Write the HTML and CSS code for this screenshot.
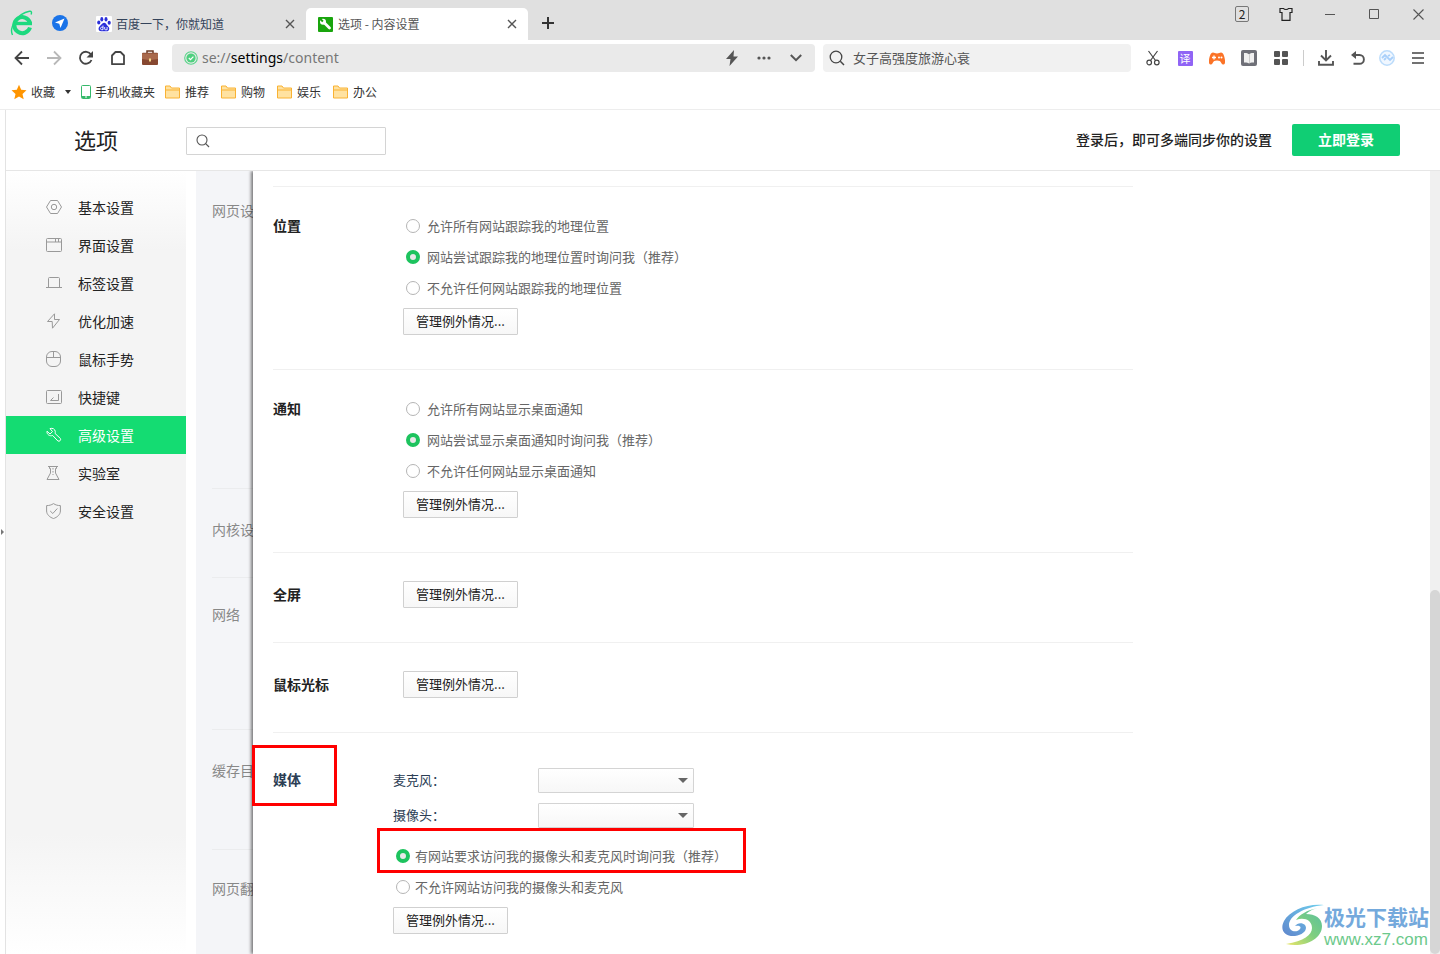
FILE: index.html
```html
<!DOCTYPE html>
<html lang="zh-CN">
<head>
<meta charset="utf-8">
<title>选项 - 内容设置</title>
<link rel="stylesheet" href="styles.css">
</head>
<body>
<div class="tabbar">
  <div class="brand">
    <svg width="24" height="26" viewBox="0 0 24 26"><g fill="none" stroke="#1dd97f"><path d="M20 17.500A8 8 0 1 1 20 12.800" stroke-width="4"/><path d="M5 13.500h17" stroke-width="3.400"/><path d="M2.500 25C-1 18 7 3.500 19.500 1.300c2-.3 2.500 1 1.500 3.200" stroke-width="1.400"/></g></svg>
    <svg width="16" height="16" viewBox="0 0 16 16"><circle cx="8" cy="8" r="8" fill="#1a73e8"/><path d="M12.500 3.500L3 7.500l4.300 1.200L8.500 13z" fill="#fff"/></svg>
  </div>
  <div class="tab">
    <svg width="16" height="16" viewBox="0 0 16 16"><rect width="16" height="16" rx="1" fill="#fff"/><g fill="#2b2fd9"><ellipse cx="2.800" cy="6.500" rx="1.600" ry="2.100"/><ellipse cx="5.800" cy="3.200" rx="1.500" ry="2.200"/><ellipse cx="10" cy="3.200" rx="1.500" ry="2.200"/><ellipse cx="13.200" cy="6.800" rx="1.600" ry="2"/><path d="M8 6.800c2 0 2.500 2.200 4.200 3.600 2 1.700 1 5-1.500 4.900-1.900-.1-3.700-.1-5.600 0-2.500.1-3.400-3-1.600-4.700C5.200 9.200 6 6.800 8 6.800z"/></g><path d="M7 9.500v4.200H5.600c-1.500 0-1.500-2.500 0-2.500H7M8.700 11v2c0 .6.300.8.900.8h1.500V11" fill="none" stroke="#fff" stroke-width=".9"/></svg>
    <span class="tab__title">百度一下，你就知道</span>
    <button class="tab__close" aria-label="关闭标签"><svg width="10" height="10" viewBox="0 0 10 10"><path d="M1 1l8 8M9 1L1 9" stroke="#555" stroke-width="1.400"/></svg></button>
  </div>
  <div class="tab tab--active">
    <svg width="15" height="15" viewBox="0 0 15 15"><rect width="15" height="15" rx="1" fill="#19a50d"/><path d="M5 4.500l6.500 6.500" stroke="#fff" stroke-width="2.800" stroke-linecap="round"/><circle cx="5" cy="4.700" r="3" fill="#fff"/><path d="M1.800 1.600L4.900 4.500" stroke="#19a50d" stroke-width="2"/></svg>
    <span class="tab__title">选项 - 内容设置</span>
    <button class="tab__close" aria-label="关闭标签"><svg width="10" height="10" viewBox="0 0 10 10"><path d="M1 1l8 8M9 1L1 9" stroke="#555" stroke-width="1.400"/></svg></button>
  </div>
  <button class="newtab" aria-label="新标签页"><svg width="12" height="12" viewBox="0 0 12 12"><path d="M6 0v12M0 6h12" stroke="#333" stroke-width="2"/></svg></button>
  <div class="window">
    <button class="window__btn"><span class="count">2</span></button>
    <button class="window__btn" aria-label="皮肤"><svg width="14" height="14" viewBox="0 0 14 14"><path d="M1 1.500h3.500c.8 1.300 4.200 1.300 5 0H13v4h-2v7.800H3V5.500H1z" fill="none" stroke="#222" stroke-width="1.200"/></svg></button>
    <button class="window__btn" aria-label="最小化"><svg width="10" height="10" viewBox="0 0 10 10"><path d="M0 5.500h10" stroke="#555"/></svg></button>
    <button class="window__btn" aria-label="最大化"><svg width="10" height="10" viewBox="0 0 10 10"><path d="M.5.500h9v9h-9z" fill="none" stroke="#555"/></svg></button>
    <button class="window__btn" aria-label="关闭"><svg width="11" height="11" viewBox="0 0 11 11"><path d="M.5.500l10 10M10.500.500l-10 10" stroke="#555" stroke-width="1.100"/></svg></button>
  </div>
</div>

<div class="toolbar">
  <div class="nav">
    <button class="icon-btn" aria-label="后退"><svg width="16" height="16" viewBox="0 0 16 16"><path d="M15 8H2M8 1.500L1.500 8 8 14.500" fill="none" stroke="#444" stroke-width="1.800"/></svg></button>
    <button class="icon-btn" aria-label="前进"><svg width="16" height="16" viewBox="0 0 16 16"><path d="M1 8h13M8 1.500L14.500 8 8 14.500" fill="none" stroke="#b8b8b8" stroke-width="1.800"/></svg></button>
    <button class="icon-btn" aria-label="刷新"><svg width="16" height="16" viewBox="0 0 16 16"><path d="M13.500 10A6 6 0 1 1 13 4.500" fill="none" stroke="#444" stroke-width="1.800"/><path d="M15 1v6.500H8.500z" fill="#444"/></svg></button>
    <button class="icon-btn" aria-label="主页"><svg width="16" height="16" viewBox="0 0 16 16"><path d="M2 14.200V5.500L5.500 2h5L14 5.500v8.700z" fill="none" stroke="#444" stroke-width="1.800" stroke-linejoin="round"/></svg></button>
    <button class="icon-btn" aria-label="工具箱"><svg width="16" height="16" viewBox="0 0 16 16"><path d="M5 3V1h6v2" fill="none" stroke="#6b3a25" stroke-width="1.500"/><rect y="2.800" width="16" height="12.200" rx="1" fill="#874830"/><path d="M0 3.500h16V9L9 10H7L0 9z" fill="#a9694c"/><rect x="7" y="8.500" width="2" height="3" fill="#f6d98b"/></svg></button>
  </div>
  <div class="address">
    <svg width="14" height="14" viewBox="0 0 14 14"><circle cx="7" cy="7" r="6.300" fill="none" stroke="#5ad48a" stroke-width="1.100"/><circle cx="7" cy="7" r="4.600" fill="#4fd07f"/><path d="M4.800 7l1.700 1.700L9.400 5.600" fill="none" stroke="#fff" stroke-width="1.200"/></svg>
    <span class="address__url">se://<b>settings</b>/content</span>
    <button class="icon-btn" aria-label="极速模式"><svg width="14" height="16" viewBox="0 0 14 16"><path d="M9 0L1 9h4.500L4.500 16 13 6.500H8.500z" fill="#555"/></svg></button>
    <button class="icon-btn" aria-label="更多"><svg width="14" height="4" viewBox="0 0 14 4"><g fill="#555"><circle cx="2" cy="2" r="1.600"/><circle cx="7" cy="2" r="1.600"/><circle cx="12" cy="2" r="1.600"/></g></svg></button>
    <button class="icon-btn" aria-label="展开"><svg width="12" height="8" viewBox="0 0 12 8"><path d="M.8 1L6 6.200 11.200 1" fill="none" stroke="#555" stroke-width="2"/></svg></button>
  </div>
  <label class="search">
    <svg width="16" height="16" viewBox="0 0 16 16"><circle cx="7" cy="7" r="5.800" fill="none" stroke="#444" stroke-width="1.300"/><path d="M11.300 11.300L15 15" stroke="#444" stroke-width="1.500"/></svg>
    <input type="text" aria-label="搜索" placeholder="女子高强度旅游心衰">
  </label>
  <div class="tools">
    <button class="icon-btn" aria-label="截图"><svg width="14" height="16" viewBox="0 0 14 16"><g fill="none" stroke="#444" stroke-width="1.200"><path d="M2.500 1l7 9.500M11.500 1l-7 9.500"/><circle cx="3.200" cy="12.500" r="2.300"/><circle cx="10.800" cy="12.500" r="2.300"/></g></svg></button>
    <button class="icon-btn"><span class="translate">译</span></button>
    <button class="icon-btn" aria-label="游戏"><svg width="16" height="13" viewBox="0 0 16 13"><path d="M4 .5c1.500 0 2 1 4 1s2.500-1 4-1c3.500 0 4.600 9 3.800 11-.6 1.600-2.500 1.300-3.500-.5C11.300 9.200 10.500 8.500 8 8.500S4.700 9.200 3.700 11c-1 1.800-2.900 2.100-3.500.5C-.6 9.500.5.500 4 .5z" fill="#fb7327"/><path d="M5 3.500v4M3 5.500h4" stroke="#fff" stroke-width="1.300"/><circle cx="10" cy="5.500" r="1" fill="#fff"/><circle cx="12.500" cy="5.500" r="1" fill="#fff"/></svg></button>
    <button class="icon-btn" aria-label="阅读"><svg width="16" height="16" viewBox="0 0 16 16"><rect width="16" height="16" rx="2" fill="#6f7078"/><path d="M8 4.200C6.500 3 5 2.800 3 3v9.500C5 12.300 6.500 12.500 8 13.600c1.500-1.100 3-1.300 5-1.100V3C11 2.800 9.500 3 8 4.200z" fill="#f0f0f0"/><path d="M8.500 4.200v9" stroke="#ccc"/></svg></button>
    <button class="icon-btn" aria-label="扩展"><svg width="14" height="14" viewBox="0 0 14 14"><g fill="#555"><rect width="6" height="6" rx="1"/><rect x="8" width="6" height="6" rx="1"/><rect y="8" width="6" height="6" rx="1"/><rect x="8" y="8" width="6" height="6" rx="1"/></g></svg></button>
    <span class="tools__sep"></span>
    <button class="icon-btn" aria-label="下载"><svg width="16" height="16" viewBox="0 0 16 16"><path d="M8 0v10M3 5.500l5 5 5-5M1 11v3.800h14V11" fill="none" stroke="#555" stroke-width="1.900"/></svg></button>
    <button class="icon-btn" aria-label="恢复"><svg width="16" height="16" viewBox="0 0 16 16"><path d="M2.500 5H9.500a4.300 4.300 0 0 1 0 8.800H3.500" fill="none" stroke="#555" stroke-width="1.900"/><path d="M6 1v8L1 5z" fill="#555"/></svg></button>
    <button class="icon-btn icon-btn--snug" aria-label="助手"><svg width="16" height="16" viewBox="0 0 16 16"><circle cx="8" cy="8" r="7.200" fill="#f0f7ff" stroke="#bcdcfb" stroke-width="1.500"/><path d="M3 8l3-3 5 5 3-3M5 10l2-2M9 6l2-1" fill="none" stroke="#a8cffa" stroke-width="1.800"/></svg></button>
    <button class="icon-btn" aria-label="菜单"><svg width="12" height="12" viewBox="0 0 12 12"><path d="M0 1h12M0 6h12M0 11h12" stroke="#444" stroke-width="1.700"/></svg></button>
  </div>
</div>

<nav class="bookmarks">
  <a class="bookmark bookmark--star" href="#"><svg width="16" height="16" viewBox="0 0 16 16"><path d="M8 .8l2.200 4.900 5.300.6-4 3.600 1.200 5.300L8 12.500l-4.700 2.700 1.200-5.300-4-3.600 5.300-.6z" fill="#ff9500"/></svg>收藏</a>
  <button class="bookmarks__more" aria-label="更多收藏"><svg width="6" height="4" viewBox="0 0 6 4"><path d="M0 0h6L3 4z" fill="#333"/></svg></button>
  <a class="bookmark" href="#"><svg width="10" height="14" viewBox="0 0 10 14"><rect x=".5" y=".5" width="9" height="13" rx="1" fill="#fff" stroke="#36b96b"/><path d="M1 11h8v2H1z" fill="#36b96b"/><path d="M4 12h2" stroke="#fff"/></svg>手机收藏夹</a>
  <a class="bookmark" href="#"><svg width="15" height="14" viewBox="0 0 15 14"><path d="M.5 13V1h4.500l1.500 2h8v10z" fill="#ffe2a1" stroke="#f9b233"/><path d="M1 5h13" stroke="#f9b233"/></svg>推荐</a>
  <a class="bookmark" href="#"><svg width="15" height="14" viewBox="0 0 15 14"><path d="M.5 13V1h4.500l1.500 2h8v10z" fill="#ffe2a1" stroke="#f9b233"/><path d="M1 5h13" stroke="#f9b233"/></svg>购物</a>
  <a class="bookmark" href="#"><svg width="15" height="14" viewBox="0 0 15 14"><path d="M.5 13V1h4.500l1.500 2h8v10z" fill="#ffe2a1" stroke="#f9b233"/><path d="M1 5h13" stroke="#f9b233"/></svg>娱乐</a>
  <a class="bookmark" href="#"><svg width="15" height="14" viewBox="0 0 15 14"><path d="M.5 13V1h4.500l1.500 2h8v10z" fill="#ffe2a1" stroke="#f9b233"/><path d="M1 5h13" stroke="#f9b233"/></svg>办公</a>
</nav>

<div class="viewport">
  <div class="gutter"><svg width="4" height="6" viewBox="0 0 4 6"><path d="M1 0l3 3-3 3z" fill="#777"/></svg></div>
  <div class="page">
    <header class="header">
      <h1 class="header__title">选项</h1>
      <label class="header__search">
        <svg width="14" height="14" viewBox="0 0 14 14"><circle cx="6" cy="6" r="5" fill="none" stroke="#555" stroke-width="1.100"/><path d="M9.700 9.700L13 13" stroke="#555" stroke-width="1.200"/></svg>
        <input type="text" aria-label="搜索设置">
      </label>
      <p class="header__tip">登录后，即可多端同步你的设置</p>
      <button class="header__login">立即登录</button>
    </header>
    <div class="body">
      <nav class="sidebar">
        <a class="side" href="#"><svg width="16" height="16" viewBox="0 0 16 16"><path d="M4.500 1.500h7L15.500 8l-4 6.500h-7L.5 8z"/><circle cx="8" cy="8" r="2.700"/></svg>基本设置</a>
        <a class="side" href="#"><svg width="16" height="16" viewBox="0 0 16 16"><rect x=".5" y="1.500" width="15" height="13" rx="1"/><path d="M1 5h14M9.500 2v3M12.500 2v3"/></svg>界面设置</a>
        <a class="side" href="#"><svg width="16" height="16" viewBox="0 0 16 16"><path d="M2.500 12V3.500q0-1 1-1h9q1 0 1 1V12M0 12.500h16"/></svg>标签设置</a>
        <a class="side" href="#"><svg width="16" height="16" viewBox="0 0 16 16"><path d="M8.500.800L1.500 8.500h4.700L6.500 15.200 13.500 6.500H8.500z"/></svg>优化加速</a>
        <a class="side" href="#"><svg width="16" height="16" viewBox="0 0 16 16"><rect x=".5" y=".5" width="14" height="15" rx="5.500"/><path d="M.5 6.500h14M7.500 1v5.500"/></svg>鼠标手势</a>
        <a class="side" href="#"><svg width="16" height="16" viewBox="0 0 16 16"><rect x=".5" y="1.500" width="15" height="13" rx="1"/><path d="M12.500 5v6.500H4.500l3-3"/></svg>快捷键</a>
        <a class="side side--active" href="#"><svg width="16" height="16" viewBox="0 0 16 16"><path d="M4 1.600C6.500.700 9 2 9.300 4.500c0 .8-.1 1.300-.3 1.900l5.500 5.200c.7 1.600-1 3.200-2.600 2.400L6.700 8.500C3.800 9.500.500 7.500 1 4.200L4 7l2.500-2.400z"/></svg>高级设置</a>
        <a class="side" href="#"><svg width="16" height="16" viewBox="0 0 16 16"><path d="M2 1.500h10M3.500 1.500v2h1V8L1 14.500h12L9.500 8V3.500h1v-2"/><path d="M7 3v7" stroke-dasharray="1.500 1.500"/></svg>实验室</a>
        <a class="side" href="#"><svg width="16" height="16" viewBox="0 0 16 16"><path d="M7.500.600C5.500 2 3 2.600.600 2.600V8c0 3.500 3.400 6.500 6.900 7.500 3.500-1 6.900-4 6.900-7.500V2.600C12 2.600 9.500 2 7.500.600z"/><path d="M4.200 8l2.600 2.500 4.500-5"/></svg>安全设置</a>
      </nav>
      <div class="under" aria-hidden="true">
        <div class="under__item under__item--first">网页设置</div>
        <div class="under__item under__item--short">内核设置</div>
        <div class="under__item under__item--net">网络</div>
        <div class="under__item">缓存目录</div>
        <div class="under__item under__item--last">网页翻译</div>
      </div>
      <main class="panel">
        <section class="section">
          <h2 class="section__title">位置</h2>
          <div class="section__body">
            <label class="radio"><input type="radio" name="geo">允许所有网站跟踪我的地理位置</label>
            <label class="radio"><input type="radio" name="geo" checked>网站尝试跟踪我的地理位置时询问我（推荐）</label>
            <label class="radio"><input type="radio" name="geo">不允许任何网站跟踪我的地理位置</label>
            <button class="manage">管理例外情况...</button>
          </div>
        </section>
        <section class="section">
          <h2 class="section__title">通知</h2>
          <div class="section__body">
            <label class="radio"><input type="radio" name="notice">允许所有网站显示桌面通知</label>
            <label class="radio"><input type="radio" name="notice" checked>网站尝试显示桌面通知时询问我（推荐）</label>
            <label class="radio"><input type="radio" name="notice">不允许任何网站显示桌面通知</label>
            <button class="manage">管理例外情况...</button>
          </div>
        </section>
        <section class="section section--single">
          <h2 class="section__title">全屏</h2>
          <button class="manage">管理例外情况...</button>
        </section>
        <section class="section section--single">
          <h2 class="section__title">鼠标光标</h2>
          <button class="manage">管理例外情况...</button>
        </section>
        <section class="section section--media">
          <h2 class="section__title">媒体</h2>
          <div class="section__body">
            <div class="devices">
              <label for="mic">麦克风：</label>
              <span class="select"><select id="mic"></select></span>
              <label for="cam">摄像头：</label>
              <span class="select"><select id="cam"></select></span>
            </div>
            <label class="radio"><input type="radio" name="media" checked>有网站要求访问我的摄像头和麦克风时询问我（推荐）</label>
            <label class="radio"><input type="radio" name="media">不允许网站访问我的摄像头和麦克风</label>
            <button class="manage">管理例外情况...</button>
          </div>
          <span class="mark mark--title"></span>
          <span class="mark mark--option"></span>
        </section>
      </main>
      <div class="scroll"><div class="scroll__thumb"></div></div>
    </div>
  </div>
</div>

<div class="watermark">
  <svg width="42" height="42" viewBox="0 0 42 42">
    <defs>
      <linearGradient id="wa" x1="1" y1="0" x2="0" y2="1"><stop offset="0" stop-color="#6fd0ee"/><stop offset="1" stop-color="#5f86cc"/></linearGradient>
      <linearGradient id="wb" x1="1" y1="0" x2="0" y2="1"><stop offset="0" stop-color="#58bfa0"/><stop offset=".5" stop-color="#7fcf7f"/><stop offset="1" stop-color="#ebe568"/></linearGradient>
    </defs>
    <path d="M42 1C26-1 8 6 2 17c-5 10 2 16 11 15 9-1 13-7 10-11-3-3-8-2-10 1 3-1 7 0 5 3-3 4-11 3-11-4C7 12 22 3 42 1z" fill="url(#wa)"/>
    <path d="M36 4C25 6 17 11 14 16c8-3 16 0 16 8 0 7-8 13-26 16 17 4 36-4 36-18 0-8-7-12-16-12 3-3 7-5 12-6z" fill="url(#wb)"/>
  </svg>
  <div class="watermark__text"><span class="watermark__name">极光下载站</span><span class="watermark__url">www.xz7.com</span></div>
</div>
</body>
</html>
```
FILE: styles.css
```css
* { box-sizing: border-box; }
body {
  margin: 0;
  height: 100vh;
  display: flex;
  flex-direction: column;
  overflow: hidden;
  background: #fff;
  color: #222;
  font: 12px/20px "Noto Sans CJK SC", sans-serif;
}
button, input, select { font: inherit; color: inherit; }
button { border: 0; padding: 0; background: none; }
a { color: inherit; text-decoration: none; }
svg { display: block; flex: none; }
h1, h2, p { margin: 0; }

/* tab strip */
.tabbar { display: flex; flex: none; height: 40px; background: #e0e0e0; }
.brand { display: flex; align-items: center; gap: 18px; width: 84px; padding: 5px 0 0 10px; }
.tab {
  display: flex; align-items: center; gap: 4px;
  width: 222px; height: 32px; margin-top: 8px; padding: 0 11px 0 12px;
  border-radius: 5px 5px 0 0; color: #34435a;
}
.tab--active { gap: 5px; background: #fff; color: #555; }
.tab__title { flex: 1; }
.tab__close { display: grid; place-items: center; width: 10px; height: 20px; }
.newtab { display: grid; place-items: center; width: 40px; padding-top: 6px; }
.window { display: flex; height: 28px; margin-left: auto; }
.window__btn { display: grid; place-items: center; width: 44px; }
.count { width: 14px; border: 1px solid #777; border-radius: 2px; font-size: 12px; line-height: 14px; }

/* toolbar */
.toolbar { display: flex; flex: none; align-items: center; height: 36px; padding-right: 6px; }
.icon-btn { display: grid; place-items: center; width: 32px; height: 28px; flex: none; }
.icon-btn--snug { margin: 0 -1px 0 -3px; }
.nav { display: flex; width: 172px; padding-left: 6px; }
.address {
  display: flex; align-items: center; flex: 1; min-width: 0; height: 28px;
  margin-right: 8px; padding: 0 3px 0 12px; border-radius: 4px; background: #eaeaea;
}
.address__url { flex: 1; margin-left: 4px; color: #777; font: 14px/20px "Noto Sans", sans-serif; }
.address__url b { color: #000; font-weight: 400; }
.search {
  display: flex; align-items: center; gap: 8px; flex: none; width: 308px; height: 28px;
  margin-right: 6px; padding: 0 6px; border-radius: 4px; background: #f1f1f1;
}
.search input { flex: 1; min-width: 0; border: 0; padding: 0; background: none; outline: 0; font-size: 13px; }
.search input::placeholder { color: #555; opacity: 1; }
.tools { display: flex; align-items: center; }
.tools__sep { width: 1px; height: 16px; margin: 0 6px; background: #ccc; }
.translate { width: 15px; border-radius: 1px; background: #9064f5; color: #fff; font-size: 11px; line-height: 15px; }

/* bookmarks */
.bookmarks {
  display: flex; flex: none; align-items: center; height: 34px; padding: 0 0 1px 11px;
  border-bottom: 1px solid #ededed; color: #333;
}
.bookmark { display: flex; align-items: center; gap: 5px; margin-right: 12px; }
.bookmark:nth-of-type(2) { gap: 4px; margin-right: 10px; }
.bookmark--star { gap: 4px; margin-right: 0; }
.bookmarks__more { display: grid; place-items: center; width: 26px; height: 20px; }

/* settings page */
.viewport { display: flex; flex: 1; min-height: 0; }
.gutter { display: flex; align-items: center; width: 6px; border-right: 1px solid #e3e3e3; }
.page { display: flex; flex-direction: column; flex: 1; min-width: 0; }
.header {
  display: flex; flex: none; align-items: center; height: 61px; padding-right: 40px;
  border-bottom: 1px solid #e6e6e6; font-size: 14px;
}
.header__title { width: 180px; padding: 0 0 2px 68px; font-size: 22px; font-weight: 400; line-height: 32px; }
.header__search {
  display: flex; align-items: center; gap: 6px; width: 200px; height: 28px; margin-top: 2px;
  padding: 0 9px; border: 1px solid #d4d4d4; border-radius: 1px;
}
.header__search input { flex: 1; min-width: 0; border: 0; padding: 0; outline: 0; }
.header__tip { margin-left: auto; padding-bottom: 2px; font-weight: 500; }
.header__login {
  width: 108px; height: 32px; margin-left: 20px; padding-bottom: 2px; border-radius: 2px;
  background: #10ce74; color: #fff; font-weight: 700;
}
.body { display: flex; flex: 1; min-height: 0; }
.sidebar {
  flex: none; width: 180px; margin-right: 10px; padding-top: 17px; font-size: 14px;
  background: linear-gradient(#fff, #f4f4f4 80px, #f4f4f4 calc(100% - 120px), #fff);
}
.side { display: flex; align-items: center; gap: 16px; height: 38px; padding: 0 0 1px 40px; }
.side svg { fill: none; stroke: #999; }
.side--active { background: #14dc72; color: #fff; }
.side--active svg { stroke: #fff; }

.under {
  flex: none; width: 57px; padding-left: 16px; overflow: hidden;
  color: #888; font-size: 14px; line-height: 22px; white-space: nowrap; background: #f4f5f8;
}
.under__item { height: 120px; padding-top: 29px; border-top: 1px solid #ebecee; }
.under__item--first { height: 317px; padding-top: 28px; border-top: 0; }
.under__item--short { height: 89px; }
.under__item--net { height: 152px; padding-top: 25px; }
.under__item--last { padding-top: 27px; }

.panel {
  position: relative; flex: 1; min-width: 0; padding: 15px 20px 0;
  background: #fff; box-shadow: -2px 0 3px rgba(0, 0, 0, .5);
  clip-path: inset(0 0 0 -8px);
}
.section {
  display: flex; align-items: flex-start; max-width: 860px;
  padding: 28px 0 34px; border-top: 1px solid #f0f0f0;
}
.section__title { flex: none; width: 130px; padding-bottom: 2px; font-size: 14px; font-weight: 700; line-height: 20px; }
.section__body { display: flex; flex-direction: column; align-items: flex-start; gap: 9px; }
.section--single { align-items: center; }
.radio {
  display: flex; align-items: center; gap: 7px; padding-left: 3px;
  color: #666; font-size: 13px; line-height: 22px;
}
.radio input {
  appearance: none; flex: none; width: 14px; height: 14px; margin: 0;
  border: 1px solid #b5b5b5; border-radius: 50%; background: #fff;
}
.radio input:checked { border: 4px solid #1dc35e; background: #e8e8e8; }
.manage {
  height: 27px; width: 115px; padding-bottom: 1px; border: 1px solid #d0d0d0; border-radius: 1px;
  background: linear-gradient(#fff, #f7f7f7); font-size: 13px; line-height: 22px;
}
.section--media { position: relative; padding-top: 35px; color: #2c3e55; }
.section--media .section__title { width: 120px; line-height: 23px; }
.section--media .radio { gap: 5px; }
.section--media .manage { color: #222; }
.devices {
  display: grid; grid-template-columns: 145px 156px; gap: 10px 0;
  margin-bottom: 8px; font-size: 13px; line-height: 23px;
}
.select { position: relative; }
.select select {
  display: block; appearance: none; width: 100%; height: 25px; border: 1px solid #d4d4d4; border-radius: 1px;
  background: linear-gradient(#fff, #f7f7f7);
}
.select::after {
  content: ""; position: absolute; right: 6px; top: 10px;
  border: 5px solid transparent; border-top-color: #666; border-bottom: 0;
}
.mark { position: absolute; border: 3px solid #f00; pointer-events: none; }
.mark--title { left: -21px; top: 12px; width: 85px; height: 61px; }
.mark--option { left: 104px; top: 95px; width: 369px; height: 45px; }

.scroll { display: flex; align-items: flex-end; flex: none; width: 10px; background: #f0f0f0; }
.scroll__thumb { width: 10px; height: 46.5%; border-radius: 5px; background: #d6d6d6; }

.watermark { position: absolute; right: 11px; bottom: 5px; display: flex; align-items: center; }
.watermark__text { display: flex; flex-direction: column; }
.watermark__name { color: #74a9dc; font-size: 21px; font-weight: 700; line-height: 30px; }
.watermark__url { color: #6cc98b; font: 17px/18px "Liberation Sans", sans-serif; }
```
